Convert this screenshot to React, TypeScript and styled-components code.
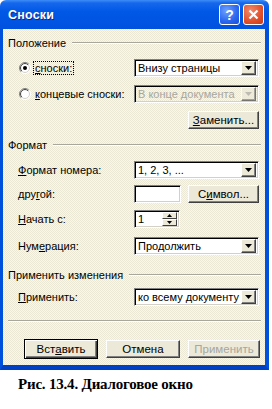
import React from "react";
import styled, { createGlobalStyle } from "styled-components";

const GlobalStyle = createGlobalStyle`
  html, body {
    margin: 0;
    padding: 0;
    background: #fff;
  }
  body {
    font-family: "Liberation Sans", Arial, sans-serif;
    font-size: 11px;
    color: #000;
  }
`;

const Window = styled.div`
  width: 269px;
  display: flex;
  flex-direction: column;
`;

const TitleBar = styled.div`
  height: 29px;
  display: flex;
  align-items: center;
  padding: 0 5px 0 8px;
  background: linear-gradient(#3d8df7 0, #1667ec 3px, #0058e6 40%, #0052de 100%);
  border-radius: 6px 6px 0 0;
`;

const Title = styled.div`
  flex: 1;
  color: #fff;
  font-weight: bold;
  font-size: 12.5px;
  letter-spacing: 0.2px;
  text-shadow: 1px 1px #0a2a8a;
`;

const CaptionButton = styled.div<{ $kind: "help" | "close" }>`
  width: 19px;
  height: 19px;
  margin-left: 3px;
  border: 1px solid #fff;
  border-radius: 3px;
  display: flex;
  align-items: center;
  justify-content: center;
  color: #fff;
  font-weight: bold;
  font-size: 14px;
  background: ${(p) =>
    p.$kind === "close"
      ? "radial-gradient(circle at 35% 30%, #f08a6c, #e0502a 60%, #c23a18)"
      : "radial-gradient(circle at 35% 30%, #6ea2ff, #2a66ee 60%, #1b4fd8)"};
`;

const Body = styled.div`
  display: flex;
  flex-direction: column;
  border-left: 3px solid #0050dc;
  border-right: 4px solid #0050dc;
  border-bottom: 5px solid #0040c4;
  padding: 0 4px 6px 5px;
  background-color: #ebe8d6;
  background-image: conic-gradient(#f8f7f1 25%, transparent 0 50%, #f8f7f1 0 75%, transparent 0);
  background-size: 2px 2px;
`;

const GroupHeader = styled.div<{ $top: number }>`
  display: flex;
  align-items: center;
  height: 14px;
  margin-top: ${(p) => p.$top}px;
  &::after {
    content: "";
    flex: 1;
    margin-left: 6px;
    height: 1px;
    background: #a9a79c;
    border-bottom: 1px solid #fff;
  }
`;

const Row = styled.div<{ $top: number; $end?: boolean }>`
  display: flex;
  align-items: center;
  height: 18px;
  margin-top: ${(p) => p.$top}px;
  margin-right: 2px;
  justify-content: ${(p) => (p.$end ? "flex-end" : "flex-start")};
`;

const Label = styled.div`
  width: 116px;
  padding-left: 10px;
  white-space: nowrap;
`;

const RadioLabel = styled.div`
  width: 126px;
  display: flex;
  align-items: center;
  padding-left: 11px;
  box-sizing: border-box;
  white-space: nowrap;
`;

const RadioText = styled.span<{ $focus?: boolean }>`
  margin-left: 2px;
  padding: 0 1px;
  border: 1px dotted ${(p) => (p.$focus ? "#000" : "transparent")};
`;

const U = styled.span`
  text-decoration: underline;
`;

const Field = styled.div<{ $width: number; $disabled?: boolean }>`
  width: ${(p) => p.$width}px;
  height: 18px;
  box-sizing: border-box;
  display: flex;
  align-items: center;
  border: 1px solid;
  border-color: #808080 #fff #fff #808080;
  box-shadow: inset 1px 1px #000, inset -1px -1px #d4d0c8;
  background: ${(p) => (p.$disabled ? "transparent" : "#fff")};
  color: ${(p) => (p.$disabled ? "#a7a69f" : "#000")};
  padding: 2px 2px 2px 3px;
  font-size: 11px;
`;

const FieldText = styled.span`
  flex: 1;
  white-space: nowrap;
  overflow: hidden;
`;

const ArrowButton = styled.div<{ $disabled?: boolean }>`
  width: 15px;
  height: 14px;
  flex-shrink: 0;
  box-sizing: border-box;
  display: flex;
  align-items: center;
  justify-content: center;
  background: #ece9d8;
  border: 1px solid;
  border-color: #fff #404040 #404040 #fff;
  box-shadow: inset -1px -1px #808080;
  opacity: ${(p) => (p.$disabled ? 0.7 : 1)};
`;

const SpinStack = styled.div`
  display: flex;
  flex-direction: column;
  width: 15px;
  height: 14px;
`;

const SpinButton = styled.div`
  flex: 1;
  display: flex;
  align-items: center;
  justify-content: center;
  box-sizing: border-box;
  background: #ece9d8;
  border: 1px solid;
  border-color: #fff #404040 #404040 #fff;
`;

const Button = styled.div<{ $width: number; $default?: boolean; $disabled?: boolean }>`
  width: ${(p) => p.$width}px;
  height: ${(p) => (p.$default ? 20 : 18)}px;
  box-sizing: border-box;
  display: flex;
  align-items: center;
  justify-content: center;
  background: #ece9d8;
  border: 1px solid;
  border-color: ${(p) => (p.$default ? "#000" : "#fff #404040 #404040 #fff")};
  box-shadow: ${(p) =>
    p.$default
      ? "inset 1px 1px #fff, inset -1px -1px #404040, inset -2px -2px #808080"
      : "inset -1px -1px #808080"};
  color: ${(p) => (p.$disabled ? "#a7a69f" : "#000")};
  font-size: 11.5px;
  white-space: nowrap;
`;

const Separator = styled.div`
  margin-top: 14px;
  height: 1px;
  background: #a9a79c;
  border-bottom: 1px solid #fff;
`;

const ButtonBar = styled.div`
  display: flex;
  gap: 8px;
  margin-top: 16px;
  padding-left: 16px;
  align-items: center;
  height: 21px;
`;

const Caption = styled.div`
  margin-top: 6px;
  padding-left: 18px;
  font-family: "Liberation Serif", "Times New Roman", serif;
  font-weight: bold;
  font-size: 15px;
  letter-spacing: -0.2px;
  line-height: 16px;
`;

const Radio = ({ checked }: { checked?: boolean }) => (
  <svg width="12" height="12" viewBox="0 0 12 12">
    <defs>
      <linearGradient id="ro" x1="0" y1="0" x2="1" y2="1">
        <stop offset="0.45" stopColor="#808080" />
        <stop offset="0.55" stopColor="#ffffff" />
      </linearGradient>
      <linearGradient id="ri" x1="0" y1="0" x2="1" y2="1">
        <stop offset="0.45" stopColor="#404040" />
        <stop offset="0.55" stopColor="#d4d0c8" />
      </linearGradient>
    </defs>
    <circle cx="6" cy="6" r="5.5" fill="#fff" stroke="url(#ro)" />
    <circle cx="6" cy="6" r="4.5" fill="#fff" stroke="url(#ri)" />
    {checked && <circle cx="6" cy="6" r="2" fill="#000" />}
  </svg>
);

const DownTri = ({ color = "#000" }: { color?: string }) => (
  <svg width="7" height="4" viewBox="0 0 7 4">
    <path d="M0 0h7L3.5 4z" fill={color} />
  </svg>
);

const UpTri = () => (
  <svg width="5" height="3" viewBox="0 0 5 3">
    <path d="M0 3h5L2.5 0z" fill="#000" />
  </svg>
);

const SmallDownTri = () => (
  <svg width="5" height="3" viewBox="0 0 5 3">
    <path d="M0 0h5L2.5 3z" fill="#000" />
  </svg>
);

const Select = ({ value, disabled }: { value: string; disabled?: boolean }) => (
  <Field $width={125} $disabled={disabled}>
    <FieldText>{value}</FieldText>
    <ArrowButton $disabled={disabled}>
      <DownTri color={disabled ? "#a7a69f" : "#000"} />
    </ArrowButton>
  </Field>
);

export default function App() {
  return (
    <>
      <GlobalStyle />
      <Window>
        <TitleBar>
          <Title>Сноски</Title>
          <CaptionButton $kind="help">?</CaptionButton>
          <CaptionButton $kind="close">
            <svg width="11" height="11" viewBox="0 0 11 11">
              <path d="M1.5 1.5l8 8M9.5 1.5l-8 8" stroke="#fff" strokeWidth="2.2" />
            </svg>
          </CaptionButton>
        </TitleBar>
        <Body>
          <GroupHeader $top={7}>Положение</GroupHeader>
          <Row $top={9}>
            <RadioLabel>
              <Radio checked />
              <RadioText $focus>
                <U>с</U>носки:
              </RadioText>
            </RadioLabel>
            <Select value="Внизу страницы" />
          </Row>
          <Row $top={8}>
            <RadioLabel>
              <Radio />
              <RadioText>
                <U>к</U>онцевые сноски:
              </RadioText>
            </RadioLabel>
            <Select value="В конце документа" disabled />
          </Row>
          <Row $top={8} $end>
            <Button $width={71}>
              <U>З</U>аменить...
            </Button>
          </Row>

          <GroupHeader $top={9}>Формат</GroupHeader>
          <Row $top={9}>
            <Label>
              <U>Ф</U>ормат номера:
            </Label>
            <Select value="1, 2, 3, ..." />
          </Row>
          <Row $top={6}>
            <Label>
              дру<U>г</U>ой:
            </Label>
            <Field $width={47} />
            <Button $width={71} style={{ marginLeft: 7 }}>
              С<U>и</U>мвол...
            </Button>
          </Row>
          <Row $top={7}>
            <Label>
              <U>Н</U>ачать с:
            </Label>
            <Field $width={46}>
              <FieldText>1</FieldText>
              <SpinStack>
                <SpinButton>
                  <UpTri />
                </SpinButton>
                <SpinButton>
                  <SmallDownTri />
                </SpinButton>
              </SpinStack>
            </Field>
          </Row>
          <Row $top={9}>
            <Label>
              Нум<U>е</U>рация:
            </Label>
            <Select value="Продолжить" />
          </Row>

          <GroupHeader $top={13}>Применить изменения</GroupHeader>
          <Row $top={6}>
            <Label>
              <U>П</U>рименить:
            </Label>
            <Select value="ко всему документу" />
          </Row>

          <Separator />
          <ButtonBar>
            <Button $width={74} $default>
              Вст<U>а</U>вить
            </Button>
            <Button $width={74}>Отмена</Button>
            <Button $width={72} $disabled>
              Применить
            </Button>
          </ButtonBar>
        </Body>
      </Window>
      <Caption>Рис. 13.4. Диалоговое окно</Caption>
    </>
  );
}
